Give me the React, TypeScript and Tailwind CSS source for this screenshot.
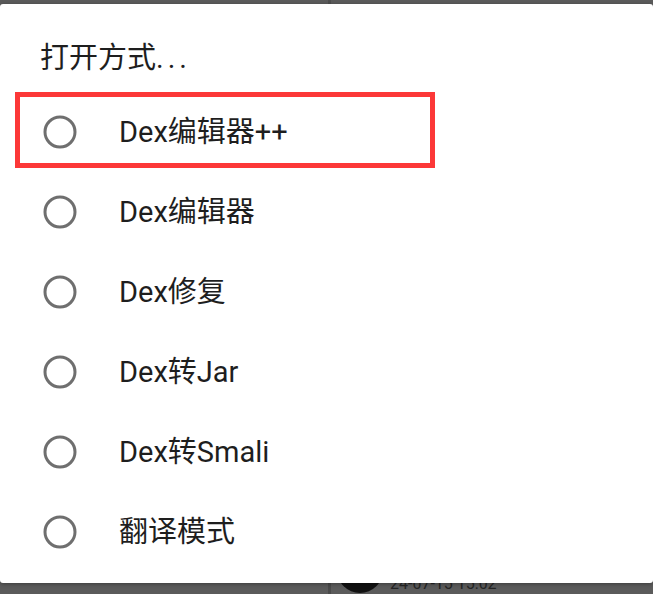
import React from 'react';

const OPTIONS = ['Dex编辑器++', 'Dex编辑器', 'Dex修复', 'Dex转Jar', 'Dex转Smali', '翻译模式'];

const FONT = "font-['Roboto','Noto_Sans_CJK_SC',sans-serif]";

function Radio() {
  return (
    <svg width="34" height="34" viewBox="0 0 34 34" className="shrink-0">
      <circle cx="17" cy="17" r="15" fill="none" stroke="#6f6f6f" strokeWidth="3" />
    </svg>
  );
}

export default function App() {
  return (
    <div className={`relative w-[653px] h-[594px] overflow-hidden bg-[#5b5b5b] ${FONT}`}>
      {/* background list behind the dim, only edges visible */}
      <div className="flex h-[4px]">
        <div className="w-[328px]" />
        <div className="w-[3px] bg-[#4e4e4e]" />
      </div>
      <div className="absolute left-0 right-0 bottom-0 h-[11px] overflow-hidden flex">
        <div className="ml-[328px] w-[3px] bg-[#4a4a4a]" />
        <div className="ml-[6px] mt-[-36px] w-[46px] h-[46px] rounded-full bg-[#111111]" />
        <div className="ml-[7px] mt-[-7px] text-[16px] leading-[16px] text-[#252525]">24-07-15 15:02</div>
      </div>

      {/* dialog */}
      <div className="absolute left-0 right-0 top-[4px] h-[579px] bg-white rounded-[3px] shadow-[0_1px_4px_rgba(0,0,0,0.35)]">
        <div className="pt-[37px] pl-[40px] text-[29px] leading-[34px] text-[#1e1e1e]">
          打开方式<span className="tracking-[4px]">...</span>
        </div>
        <div className="mt-[17px] flex flex-col">
          {OPTIONS.map((o) => (
            <div key={o} className="h-[80px] flex items-center pl-[43px]">
              <Radio />
              <span className="ml-[42px] text-[29px] leading-[34px] text-[#1e1e1e]">{o}</span>
            </div>
          ))}
        </div>
        {/* highlight annotation */}
        <div className="absolute left-[15px] top-[88px] w-[420px] h-[76px] border-[5px] border-[#fc3838]" />
      </div>
    </div>
  );
}
